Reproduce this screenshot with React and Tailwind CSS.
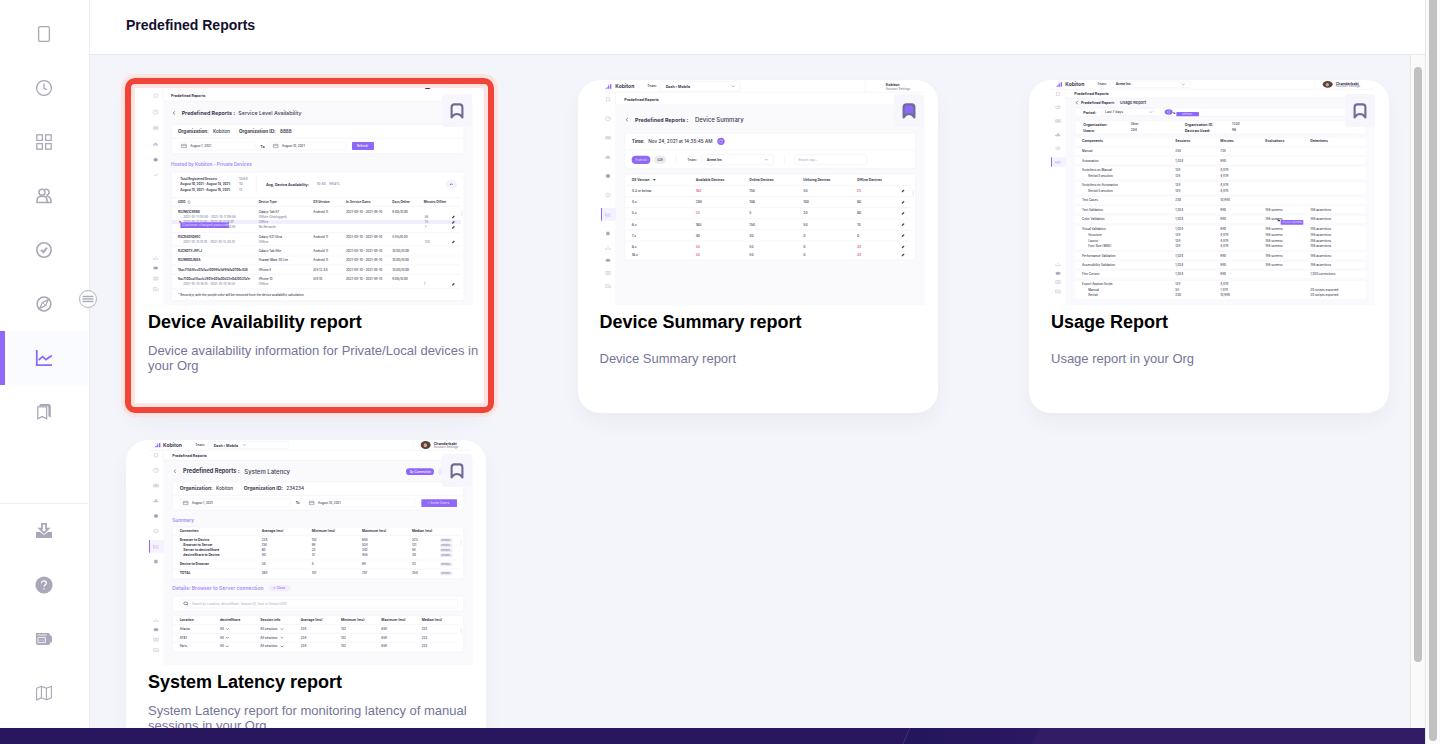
import React from "react";

const INK = "#3d3a52";
const MUTED = "#8583a0";
const PURPLE = "#8f68fa";
const PINK = "#e0447a";

/* ---------- sidebar icons ---------- */

function Icon({ children, className = "text-[#a9a7b8]" }) {
  return (
    <svg viewBox="0 0 18 18" className={`size-[18px] ${className}`} fill="none" stroke="currentColor" strokeWidth="1.3" aria-hidden="true">
      {children}
    </svg>
  );
}

const topItems = [
  { label: "Devices", icon: <rect x="3.6" y="1.6" width="10.8" height="14.8" rx="1.6" /> },
  {
    label: "Sessions",
    icon: (
      <>
        <circle cx="9" cy="9" r="7.4" />
        <path d="M9 4.6V9.3L11.8 10.6" />
      </>
    ),
  },
  {
    label: "Apps",
    icon: (
      <>
        <rect x="1.8" y="1.8" width="5.6" height="5.6" />
        <rect x="10.6" y="1.8" width="5.6" height="5.6" />
        <rect x="1.8" y="10.6" width="5.6" height="5.6" />
        <rect x="10.6" y="10.6" width="5.6" height="5.6" />
      </>
    ),
  },
  {
    label: "Teams",
    icon: (
      <g strokeWidth="1.5">
        <circle cx="7" cy="5.2" r="3" />
        <path d="M2 15.6V13.4C2 10.8 4 9.2 7 9.2S12 10.8 12 13.4V15.6Z" />
        <path d="M9.8 2.4C12 1.6 14 3 14 5.2C14 7 12.8 8 11.4 8.2M11.4 9.2C14.4 9.4 16 11.2 16 13.6V15.6H12" />
      </g>
    ),
  },
  {
    label: "Validations",
    icon: (
      <g strokeWidth="1.6">
        <circle cx="9" cy="9" r="7.2" />
        <path d="M6 8.8L8.4 11.2L12 6.6" strokeWidth="1.9" />
      </g>
    ),
  },
  {
    label: "Explore",
    icon: (
      <g strokeWidth="1.5">
        <circle cx="9" cy="9" r="6.9" />
        <path d="M13.4 4.6L10.6 10.6L4.6 13.4L7.4 7.4Z" strokeWidth="1.2" />
        <path d="M7.4 7.4L10.6 10.6" strokeWidth="1" />
      </g>
    ),
  },
  {
    label: "Reports",
    active: true,
    icon: <path d="M1.8 1V16.2H17M3.6 11.2L7.6 7.6L11 10.6L16.8 6.4" strokeWidth="1.8" />,
  },
  {
    label: "Saved",
    icon: (
      <>
        <path d="M5.4 1H13.4Q15.8 1 15.8 3V14.4L13.4 13.2V4.6Q13.4 3 11.8 3H4.2Q4.2 1 5.4 1Z" fill="currentColor" stroke="none" />
        <path d="M2.8 3.8H11.6V15.8L7.2 13.6L2.8 15.8Z" />
      </>
    ),
  },
];

const bottomItems = [
  {
    label: "Downloads",
    icon: (
      <>
        <path d="M1 10H5L9 13L13 10H17V16H1Z" fill="currentColor" stroke="none" />
        <path d="M7 1.8H11V6.6H13.4L9 11L4.6 6.6H7Z" fill="white" strokeWidth="1.8" />
      </>
    ),
  },
  {
    label: "Help",
    icon: (
      <>
        <circle cx="9" cy="9" r="8.6" fill="currentColor" stroke="none" />
        <path d="M6.6 7.2C6.6 5.6 7.6 4.8 9 4.8S11.4 5.6 11.4 7C11.4 8.8 9 8.8 9 10.8M9 12.2V13.6" stroke="white" strokeWidth="1.2" />
      </>
    ),
  },
  {
    label: "Billing",
    icon: (
      <>
        <path d="M1 3H13.4Q15 3 15 5L17 6.4V11.6L15 13Q15 15 13.4 15H3Q1 15 1 13Z" fill="currentColor" stroke="none" />
        <path d="M2.4 5H12M3 7.4H10.4V12.6H3Z" stroke="white" strokeWidth="0.8" />
        <path d="M4.6 11L6 9.4M6.6 11L8 9.4M8.4 11L9.4 9.6" stroke="white" strokeWidth="0.5" />
      </>
    ),
  },
  {
    label: "Product tour",
    icon: <path d="M1.6 4.2L6.4 2.2V13.8L1.6 15.8ZM6.4 2.2L11.4 4.2V15.8L6.4 13.8M11.4 4.2L16.4 2.2V13.8L11.4 15.8" strokeWidth="1.1" />,
  },
];

function NavItem({ label, icon, active }) {
  return (
    <a
      href="#"
      aria-label={label}
      aria-current={active ? "page" : undefined}
      className={`flex h-[54px] items-center justify-center ${active ? "border-l-[5px] border-[#8f68fa] bg-[#fafbff] pr-[5px]" : ""}`}
    >
      <Icon className={active ? "text-[#8f68fa]" : "text-[#a9a7b8]"}>{icon}</Icon>
    </a>
  );
}

/* ---------- report previews ---------- */

/* rows: [x, centre y, text] */
function Lines({ rows, size = 9, weight = 500, fill = INK }) {
  return (
    <g fontSize={size} fontWeight={weight} fill={fill}>
      {rows.map(([x, y, text], i) => (
        <text key={i} x={x} y={y} dominantBaseline="central">
          {text}
        </text>
      ))}
    </g>
  );
}

function Panel({ x, y, w, h }) {
  return <rect x={x} y={y} width={w} height={h} rx="4" fill="white" stroke="#f3f3f9" strokeWidth="2" />;
}

function Rules({ x1, x2, ys }) {
  return (
    <g stroke="#f3f3f9" strokeWidth="2">
      {ys.map((y) => (
        <line key={y} x1={x1} x2={x2} y1={y} y2={y} />
      ))}
    </g>
  );
}

function MiniNav({ x, ys, footYs, active, solid, saved, flat }) {
  const h = flat ? 6 : 10;
  return (
    <g fill="none" stroke="#bcbace" strokeWidth="1.5">
      {active && (
        <>
          <rect x={x - 20} y={active - (flat ? 14 : 19)} width="44" height={flat ? 28 : 38} fill="#f5f1ff" stroke="none" />
          <rect x={x - 21} y={active - (flat ? 14 : 19)} width="3" height={flat ? 28 : 38} fill={PURPLE} stroke="none" />
          <path d={`M${x - 7} ${active - h / 2}V${active + h / 2}H${x + 8}M${x - 4} ${active + 1}L${x} ${active - 2}L${x + 3} ${active}L${x + 8} ${active - 2}`} stroke="#b49bf8" />
        </>
      )}
      {ys.map((y, i) => {
        if (i === solid) return <ellipse key={y} cx={x} cy={y} rx="6" ry="5" fill="#9c9ab5" />;
        if (i === 0) return <rect key={y} x={x - 5} y={y - 5} width="10" height="10" rx="1" />;
        if (i === 1) return <path key={y} d={`M${x - 8} ${y}a8 ${h / 2 + 1} 0 1 0 16 0a8 ${h / 2 + 1} 0 1 0 -16 0M${x} ${y - 3}V${y}H${x + 4}`} />;
        if (i === 2) return <path key={y} d={`M${x - 7} ${y - 4}H${x - 1}V${y + 4}H${x - 7}ZM${x + 1} ${y - 4}H${x + 7}V${y + 4}H${x + 1}ZM${x - 7} ${y}H${x + 7}`} />;
        if (i === 3) return <path key={y} d={`M${x - 7} ${y + 4}V${y + 1}H${x + 6}V${y + 4}ZM${x - 3} ${y - 3}H${x + 3}V${y}H${x - 3}Z`} fill="#d5d3e2" />;
        return <path key={y} d={`M${x - 7} ${y}a7 ${h / 2 + 1} 0 1 0 14 0a7 ${h / 2 + 1} 0 1 0 -14 0M${x - 3} ${y}l3 2l4 -4`} />;
      })}
      {saved && <rect x={x - 5} y={saved - 4} width="9" height="9" fill="#a9a7c0" />}
      <path d={`M${x - 7} ${footYs[0]}V${footYs[0] + 4}H${x + 7}V${footYs[0]}M${x} ${footYs[0] - 5}V${footYs[0] + 1}`} />
      <ellipse cx={x} cy={footYs[1]} rx="7" ry="4" fill="#a09eba" />
      <path d={`M${x - 7} ${footYs[2] - 4}L${x - 2} ${footYs[2] - 5}L${x + 2} ${footYs[2] - 4}L${x + 7} ${footYs[2] - 5}V${footYs[2] + 4}H${x - 7}ZM${x - 2} ${footYs[2] - 5}V${footYs[2] + 4}M${x + 2} ${footYs[2] - 4}V${footYs[2] + 4}`} />
      <path d={`M${x - 7} ${footYs[3] - 4}H${x + 4}L${x + 8} ${footYs[3]}V${footYs[3] + 5}H${x - 7}ZM${x - 4} ${footYs[3] + 1}H${x + 5}`} />
    </g>
  );
}

function MiniLogo({ x, y }) {
  return (
    <g fill={PURPLE}>
      <path d={`M${x - 2} ${y + 7}L${x + 5} ${y + 1}V${y + 7}ZM${x + 6} ${y + 7}V${y}L${x + 10} ${y - 3}V${y + 7}ZM${x + 12} ${y + 7}V${y - 6}H${x + 16}V${y + 7}Z`} />
      <circle cx={x + 7} cy={y - 4} r="1.5" />
    </g>
  );
}

function Pencils({ x, ys }) {
  return (
    <g stroke="#4a475f" strokeWidth="4" strokeLinecap="round">
      {ys.map((y) => (
        <path key={y} d={`M${x - 2} ${y + 2}L${x + 2} ${y - 2}`} />
      ))}
    </g>
  );
}

function Chevron({ x, y, w = 4, color = "#8583a0" }) {
  return <path d={`M${x - w} ${y - 2}L${x} ${y + 2}L${x + w} ${y - 2}`} fill="none" stroke={color} strokeWidth="1.6" />;
}

function Back({ x, y }) {
  return <path d={`M${x + 2} ${y - 5}L${x - 2} ${y}L${x + 2} ${y + 5}`} fill="none" stroke={INK} strokeWidth="1.8" />;
}

function DateField({ x, y, w, text }) {
  return (
    <g>
      <Panel x={x} y={y - 12} w={w} h={24} />
      <path d={`M${x + 11} ${y - 5}H${x + 25}V${y + 5}H${x + 11}ZM${x + 11} ${y - 1}H${x + 25}`} fill="none" stroke="#77758c" strokeWidth="1.6" />
      <Lines rows={[[x + 37, y, text]]} size={9} />
    </g>
  );
}

function Preview({ viewBox, label, children }) {
  return (
    <svg viewBox={viewBox} role="img" aria-label={label} className="block w-full font-['Inter',sans-serif]">
      {children}
    </svg>
  );
}

function AvailabilityPreview() {
  const span = "2021-08-10 - 2021-08-10";
  return (
    <Preview viewBox="18 30 1080 675" label="Service Level Availability preview">
      <rect x="129" y="94" width="930" height="611" fill="#fafafd" />
      <path d="M129 50V94H1040" fill="none" stroke="#f3f3f8" strokeWidth="2" />
      <ellipse cx="923" cy="50" rx="10" ry="7" fill="#3f3330" />
      <MiniNav x={107} ys={[77, 126, 174, 222, 269]} solid={4} footYs={[564, 594, 626, 657]} />
      <path d="M101 319L105 315L109 316L114 313" fill="none" stroke="#bcbace" strokeWidth="1.6" />
      <Back x={162} y={129} />
      <Lines rows={[[153, 77, "Predefined Reports"]]} size={11} weight={700} />
      <Lines rows={[[185, 129, "Predefined Reports :"]]} size={16} weight={700} />
      <Lines rows={[[355, 129, "Service Level Availability"]]} size={16} />
      <Panel x={154} y={163} w={878} h={88} />
      <Rules x1={154} x2={1032} ys={[205]} />
      <Lines rows={[[174, 183, "Organization:"], [357, 183, "Organization ID:"]]} size={14} weight={700} />
      <Lines rows={[[279, 183, "Kobiton"], [480, 183, "8888"]]} size={14} />
      <DateField x={174} y={228} w={230} text="August 1, 2021" />
      <DateField x={449} y={228} w={230} text="August 10, 2021" />
      <Lines rows={[[421, 228, "To"]]} size={11} weight={600} />
      <rect x="696" y="216" width="66" height="24" rx="3" fill={PURPLE} />
      <Lines rows={[[711, 228, "Refresh"]]} size={9} fill="white" />
      <Lines rows={[[153, 282, "Hosted by Kobiton - Private Devices"]]} size={14} weight={600} fill="#a78af8" />
      <Panel x={154} y={306} w={878} h={386} />
      <Lines rows={[[181, 327, "Total Registered Devices:"], [181, 343, "August 10, 2021 - August 14, 2021:"], [181, 360, "August 15, 2021 - August 16, 2021:"]]} size={9} weight={700} />
      <Lines rows={[[357, 327, "10.64"], [357, 343, "10"], [357, 360, "11"], [590, 343, "10:48"], [628, 343, "99.8%"]]} size={10} fill={MUTED} />
      <line x1="409" x2="409" y1="318" y2="370" stroke="#ececf4" strokeWidth="2" />
      <Lines rows={[[438, 343, "Avg. Device Availability:"]]} size={11} weight={700} />
      <ellipse cx="994" cy="343" rx="17" ry="14" fill="#f4f3fa" />
      <path d="M990 345L994 341L998 345" fill="none" stroke={INK} strokeWidth="2" />
      <Rules x1={154} x2={1022} ys={[383, 409, 488, 528, 558, 585, 613, 656]} />
      <rect x="154" y="450" width="869" height="12" fill="#f1eefd" />
      <Lines rows={[[174, 397, "UDID"], [416, 397, "Device Type"], [580, 397, "OS Version"], [678, 397, "In-Service Dates"], [817, 397, "Days Online"], [911, 397, "Minutes Offline"]]} size={9} weight={700} />
      <circle cx="207" cy="396" r="4" fill="none" stroke={MUTED} strokeWidth="1.5" />
      <Lines rows={[[174, 425, "R52N61C9BNX"], [174, 500, "R5CR40EQ9BC"], [174, 544, "R3CN0T8 J9FLJ"], [174, 571, "R52NR00JNXA"], [174, 599, "19ac7f548fcc07a1acf0099fa1df9fb1a0706c836"], [174, 627, "9ac7f00caf2facfc3901e40fa00d22e0d20537a1e"]]} size={9} weight={700} />
      <Lines
        rows={[
          [416, 425, "Galaxy Tab S7"], [416, 500, "Galaxy S21 Ultra"], [416, 544, "Galaxy Tab S6e"], [416, 571, "Huawei Mate 20 Lite"], [416, 599, "iPhone 8"], [416, 627, "iPhone 10"],
          [580, 425, "Android 11"], [580, 500, "Android 11"], [580, 544, "Android 11"], [580, 571, "Android 11"], [580, 599, "iOS 12.4.8"], [580, 627, "iOS 10"],
          ...[425, 500, 544, 571, 599, 627].map((y) => [678, y, span]),
          [817, 425, "9.00/10.00"], [817, 500, "8.85/10.00"], [817, 544, "10.00/10.00"], [817, 571, "10.00/10.00"], [817, 599, "10.00/10.00"], [817, 627, "9.00/10.00"],
          [174, 675, "* Record(s) with the purple color will be removed from the device availability calculation"],
        ]}
        size={9}
      />
      <Lines
        rows={[
          [190, 441, "2021-10-11 08:50 - 2021-10-11 09:56"], [190, 457, "2021-10-11 12:50 - 2021-10-11 14:07"], [190, 472, "2021-10-12 10:50 - 2021-10-12 10:58"], [190, 516, "2021-10-15 18:10 - 2021-10-15 20:10"], [190, 643, "2021-10-14 16:10 - 2021-10-14 16:58"],
          [416, 441, "Offline (Unplugged)"], [416, 457, "Offline"], [416, 472, "No Network"], [416, 516, "Offline"], [416, 643, "Offline"],
          [914, 441, "66"], [914, 457, "75"], [914, 472, "7"], [914, 516, "120"], [911, 643, "7"],
        ]}
        size={9}
        fill={MUTED}
      />
      <Pencils x={1000} ys={[441, 457, 472, 516, 643]} />
      <rect x="181" y="457" width="146" height="17" fill={PURPLE} />
      <path d="M177 452L183 455L180 459Z" fill={INK} />
      <Lines rows={[[187, 465, "Customer changed passcode"]]} size={10} fill="#ddd0ff" />
      <rect x="1024" y="422" width="3" height="16" fill="#e8e8f0" />
    </Preview>
  );
}

function SummaryPreview() {
  const body = [
    [363, "4.3 or below", "180", "150", "50", "25"],
    [397, "4.x", "200", "108", "100", "80"],
    [430, "5.x", "25", "5", "20", "80"],
    [464, "6.x", "180", "150", "50", "10"],
    [497, "7.x", "40", "40", "0", "0"],
    [531, "8.x", "50", "50", "0", "34"],
    [555, "18.x", "50", "50", "0", "34"],
  ];
  const red = new Set([363, 430, 531, 555]);
  const redLast = new Set([363, 531, 555]);
  return (
    <Preview viewBox="21 30 1080 675" label="Device Summary preview">
      <rect x="133" y="105" width="928" height="600" fill="#fafafd" />
      <path d="M90 67H1060M133 67V105H1060M883 30V67" fill="none" stroke="#f3f3f8" strokeWidth="2" />
      <MiniLogo x={105} y={49} />
      <Lines rows={[[133, 49, "Kobiton"]]} size={15} weight={700} />
      <Lines rows={[[229, 49, "Team:"]]} size={10} />
      <Panel x={268} y={34} w={240} h={29} />
      <Lines rows={[[284, 49, "Dash  ›  Mobile"], [160, 87, "Predefined Reports"], [944, 44, "Kobiton"]]} size={11} weight={700} />
      <Lines rows={[[944, 57, "Account Settings"]]} size={9} fill={MUTED} />
      <Chevron x={487} y={49} />
      <MiniNav x={111} ys={[88, 146, 203, 261, 318, 376]} solid={4} active={433} saved={490} footYs={[534, 571, 609, 648]} />
      <Back x={168} y={149} />
      <Lines rows={[[192, 149, "Predefined Reports :"]]} size={16} weight={700} />
      <Lines rows={[[372, 149, "Device Summary"]]} size={18} />
      <Panel x={161} y={189} w={873} h={107} />
      <Rules x1={161} x2={1034} ys={[240]} />
      <Lines rows={[[182, 214, "Time:"]]} size={14} weight={700} />
      <Lines rows={[[232, 214, "Nov 24, 2021 at 14:35:45 AM"]]} size={14} />
      <circle cx="450" cy="214" r="11" fill={PURPLE} />
      <path d="M454 211A5 5 0 1 0 455 216M455 209V213H451" fill="none" stroke="#ded0ff" strokeWidth="1.6" />
      <rect x="182" y="257" width="56" height="25" rx="12" fill={PURPLE} />
      <rect x="249" y="257" width="36" height="25" rx="12" fill="#ededf5" />
      <Lines rows={[[193, 269, "Android"]]} size={9} fill="#ddd0ff" />
      <Lines rows={[[259, 269, "iOS"], [349, 269, "Team:"]]} size={10} />
      <Panel x={391} y={254} w={216} h={30} />
      <Lines rows={[[407, 269, "Acme Inc."]]} size={10} weight={700} />
      <Chevron x={586} y={269} />
      <path d="M316 254V284M640 254V284" stroke="#f1f1f7" strokeWidth="2" />
      <Panel x={671} y={254} w={216} h={30} />
      <Lines rows={[[682, 269, "Search tags..."]]} size={9} fill="#b7b5c9" />
      <Panel x={161} y={312} w={873} h={258} />
      <Lines rows={[[182, 329, "OS Version"], [374, 329, "Available Devices"], [535, 329, "Online Devices"], [697, 329, "Utilizing Devices"], [858, 329, "Offline Devices"]]} size={10} weight={700} />
      <path d="M246 327H254L250 332Z" fill={INK} />
      <Rules x1={161} x2={1022} ys={[346, 380, 413, 447, 480, 513]} />
      {body.map(([y, os, avail, online, util, off]) => (
        <g key={y}>
          <Lines rows={[[182, y, os], [535, y, online], [697, y, util]]} size={10} />
          <Lines rows={[[374, y, avail]]} size={10} fill={red.has(y) ? PINK : INK} />
          <Lines rows={[[858, y, off]]} size={10} fill={redLast.has(y) ? PINK : INK} />
        </g>
      ))}
      <Pencils x={996} ys={body.map((r) => r[0])} />
      <rect x="1025" y="362" width="3" height="17" fill="#e8e8f0" />
    </Preview>
  );
}

function UsagePreview() {
  const bands = [
    [205, 22], [235, 19], [262, 20], [291, 37], [336, 37], [382, 20], [409, 20], [437, 22], [468, 71], [547, 20], [575, 20], [603, 20], [633, 54],
  ];
  const body = [
    [244, "Manual", "254", "734"],
    [272, "Automation", "1,024", "980"],
    [301, "Scriptless on Manual", "128", "4,878"],
    [346, "Scriptless on Automation", "128", "4,878"],
    [391, "Test Cases", "230", "10,980"],
    [419, "Text Validation", "1,024", "980", "186 screens", "186 assertions"],
    [448, "Color Validation", "1,024", "980", "186 screens", "186 assertions"],
    [478, "Visual Validation", "1,024", "980", "186 screens", "186 assertions"],
    [557, "Performance Validation", "1,024", "980", "186 screens", "186 assertions"],
    [585, "Accessibility Validation", "1,024", "980", "186 screens", "186 assertions"],
    [613, "Flex Correct", "1,024", "980", "", "1,020 corrections"],
    [642, "Export Appium Script", "128", "4,878"],
  ];
  const sub = [
    [317, "Revisit Execution", "128", "4,878"],
    [362, "Revisit Execution", "128", "4,878"],
    [495, "Structure", "128", "4,878", "186 screens", "186 assertions"],
    [512, "Layout", "128", "4,878", "186 screens", "186 assertions"],
    [529, "Font Size (WBE)", "128", "4,878", "186 screens", "186 assertions"],
    [659, "Manual", "58", "1,878", "", "20 scripts exported"],
    [676, "Revisit", "230", "10,980", "", "20 scripts exported"],
  ];
  const cells = (row, x) => [[x, row[0], row[1]], [466, row[0], row[2]], [601, row[0], row[3]], [736, row[0], row[4]], [871, row[0], row[5]]]
    .map(([cx, y, text]) => [cx, y, text])
    .filter((cell) => cell[2]);
  return (
    <Preview viewBox="27 30 1080 675" label="Usage Report preview">
      <rect x="136" y="84" width="929" height="621" fill="#fafafe" />
      <path d="M90 58H1060M136 58V84H1060M884 30V58" fill="none" stroke="#f3f3f8" strokeWidth="2" />
      <MiniLogo x={110} y={43} />
      <Lines rows={[[136, 43, "Kobiton"]]} size={15} weight={700} />
      <Lines rows={[[232, 43, "Team:"]]} size={10} />
      <Panel x={271} y={33} w={240} h={20} />
      <Lines rows={[[287, 43, "Acme Inc."]]} size={10} weight={700} />
      <Chevron x={490} y={43} />
      <ellipse cx="923" cy="43" rx="15" ry="10" fill="#5b433b" />
      <ellipse cx="922" cy="44" rx="5" ry="5" fill="#d9a58c" />
      <Lines rows={[[947, 40, "Chanderbabi"]]} size={11} weight={700} />
      <Lines rows={[[947, 49, "Account Settings"]]} size={9} fill={MUTED} />
      <MiniNav x={114} ys={[72, 112, 153, 194, 235]} active={276} flat footYs={[583, 610, 636, 664]} />
      <Lines rows={[[163, 71, "Predefined Reports"]]} size={11} weight={700} />
      <Back x={171} y={98} />
      <Lines rows={[[183, 98, "Predefined Report:"]]} size={11} weight={700} />
      <Lines rows={[[300, 98, "Usage Report"]]} size={12} weight={600} />
      <Panel x={165} y={113} w={872} h={26} />
      <Panel x={245} y={116} w={160} h={20} />
      <Lines rows={[[190, 126, "Period:"]]} size={11} weight={700} />
      <Lines rows={[[255, 126, "Last 7 days"]]} size={10} />
      <Chevron x={393} y={126} />
      <ellipse cx="446" cy="126" rx="12" ry="8" fill={PURPLE} />
      <path d="M450 124A5 3 0 1 0 450 128" fill="none" stroke="#ded0ff" strokeWidth="1.6" />
      <path d="M457 127L468 129L463 132Z" fill={INK} />
      <rect x="469" y="126" width="68" height="13" rx="2" fill={PURPLE} />
      <Lines rows={[[487, 132, "Refresh"]]} size={8} fill="#ddd0ff" />
      <Panel x={165} y={151} w={872} h={41} />
      <Lines rows={[[190, 162, "Organization:"], [190, 181, "Users:"], [494, 162, "Organization ID:"], [494, 181, "Devices Used:"]]} size={11} weight={700} />
      <Lines rows={[[332, 162, "Uber"], [332, 181, "204"], [636, 162, "1234"], [636, 181, "96"]]} size={10} />
      {bands.map(([y, h]) => (
        <rect key={y} x="165" y={y} width="872" height={h} fill="white" />
      ))}
      <Lines rows={[[186, 214, "Components"], [466, 214, "Sessions"], [601, 214, "Minutes"], [736, 214, "Evaluations"], [871, 214, "Detections"]]} size={10} weight={700} />
      <Lines rows={body.flatMap((r) => cells(r, 186))} size={9} />
      <Lines rows={sub.flatMap((r) => cells(r, 205))} size={9} />
      <path d="M769 447L781 451L777 455Z" fill={INK} />
      <rect x="782" y="450" width="68" height="14" rx="2" fill={PURPLE} />
      <Lines rows={[[787, 457, "35,423 screens"]]} size={8} fill="#ddd0ff" />
    </Preview>
  );
}

function LatencyPreview() {
  const summary = [
    [331, 179, "Browser to Device", "234", "152", "658", "223"],
    [346, 190, "Browser to Server", "134", "98", "534", "121"],
    [361, 190, "Server to deviceShare", "60", "23", "342", "58"],
    [376, 190, "deviceShare to Device", "40", "12", "455", "30"],
    [403, 179, "Device to Browser", "34", "5", "98", "32"],
    [430, 179, "TOTAL", "268", "157", "757", "254"],
  ];
  const details = [
    [597, "Atlanta"],
    [623, "AT&T"],
    [649, "Paris"],
  ];
  return (
    <Preview viewBox="18 30 1080 675" label="System Latency preview">
      <rect x="130" y="91" width="929" height="614" fill="#fafafd" />
      <path d="M88 61H1055M130 61V91H1055M880 30V61" fill="none" stroke="#f3f3f8" strokeWidth="2" />
      <MiniLogo x={105} y={45} />
      <Lines rows={[[129, 45, "Kobiton"]]} size={15} weight={700} />
      <Lines rows={[[226, 45, "Team:"]]} size={10} />
      <Panel x={265} y={34} w={240} h={22} />
      <Lines rows={[[281, 45, "Dash  ›  Mobile"], [157, 75, "Predefined Reports"]]} size={11} weight={700} />
      <Chevron x={373} y={45} />
      <ellipse cx="917" cy="45" rx="15" ry="12" fill="#5b433b" />
      <ellipse cx="916" cy="46" rx="5" ry="6" fill="#d9a58c" />
      <Lines rows={[[941, 41, "Chanderbabi"]]} size={11} weight={700} />
      <Lines rows={[[941, 51, "Account Settings"]]} size={9} fill={MUTED} />
      <MiniNav x={108} ys={[76, 121, 167, 212, 258, 303]} solid={4} active={349} saved={394} footYs={[570, 599, 629, 660]} />
      <Back x={165} y={124} />
      <Lines rows={[[189, 124, "Predefined Reports :"]]} size={17} weight={700} />
      <Lines rows={[[373, 124, "System Latency"]]} size={18} />
      <rect x="858" y="115" width="84" height="20" rx="10" fill={PURPLE} />
      <Lines rows={[[870, 125, "By Connection"]]} size={9} fill="white" />
      <rect x="954" y="115" width="84" height="20" rx="10" fill="#ededf5" />
      <Panel x={157} y={156} w={874} h={84} />
      <Rules x1={157} x2={1031} ys={[196]} />
      <Lines rows={[[179, 175, "Organization:"], [371, 175, "Organization ID:"]]} size={15} weight={700} />
      <Lines rows={[[288, 175, "Kobiton"], [499, 175, "234234"]]} size={14} />
      <DateField x={179} y={219} w={332} text="August 1, 2021" />
      <DateField x={557} y={219} w={330} text="August 10, 2021" />
      <Lines rows={[[527, 219, "To"]]} size={10} weight={600} />
      <rect x="904" y="208" width="107" height="23" rx="2" fill={PURPLE} />
      <Lines rows={[[922, 219, "+  Invite Users"]]} size={10} fill="#e4d9ff" />
      <Lines rows={[[157, 271, "Summary"]]} size={14} weight={600} fill="#a78af8" />
      <Panel x={157} y={291} w={874} h={156} />
      <Lines rows={[[179, 304, "Connection"], [425, 304, "Average (ms)"], [575, 304, "Minimum (ms)"], [726, 304, "Maximum (ms)"], [876, 304, "Median (ms)"]]} size={10} weight={700} />
      <Rules x1={157} x2={1022} ys={[317, 390, 417]} />
      <Lines rows={summary.map((r) => [r[1], r[0], r[2]])} size={10} weight={700} />
      <Lines rows={summary.flatMap((r) => [[425, r[0], r[3]], [575, r[0], r[4]], [726, r[0], r[5]], [876, r[0], r[6]]])} size={9} />
      {summary.map(([y]) => (
        <g key={y}>
          <rect x="960" y={y - 6} width="38" height="12" rx="5" fill="#ecebf5" />
          <Lines rows={[[964, y, "Details"]]} size={8} fill={MUTED} />
        </g>
      ))}
      <rect x="1022" y="330" width="3" height="15" fill="#e8e8f0" />
      <Lines rows={[[157, 475, "Details: Browser to Server connection"]]} size={15} weight={600} fill="#a78af8" />
      <rect x="447" y="466" width="65" height="18" rx="8" fill="#f3edff" />
      <Lines rows={[[459, 475, "✕  Close"]]} size={9} fill={PURPLE} />
      <Panel x={157} y={498} w={874} h={46} />
      <Panel x={179} y={508} w={833} h={26} />
      <ellipse cx="197" cy="520" rx="6" ry="4" fill="none" stroke={INK} strokeWidth="1.6" />
      <path d="M201 523L205 526" stroke={INK} strokeWidth="1.6" />
      <Lines rows={[[216, 521, "Search by Location, deviceShare, Session ID, User or Device UDID"]]} size={9} fill="#b7b5c9" />
      <Panel x={157} y={557} w={874} h={109} />
      <Rules x1={157} x2={1014} ys={[583, 610, 637]} />
      <Lines rows={[[179, 570, "Location"], [300, 570, "deviceShare"], [421, 570, "Session info"], [542, 570, "Average (ms)"], [663, 570, "Minimum (ms)"], [784, 570, "Maximum (ms)"], [905, 570, "Median (ms)"]]} size={10} weight={700} />
      <Lines rows={details.flatMap(([y, place]) => [[179, y, place], [300, y, "All"], [421, y, "All sessions"], [542, y, "234"], [663, y, "152"], [784, y, "658"], [905, y, "223"]])} size={9} />
      {details.map(([y]) => (
        <g key={y}>
          <Chevron x={322} y={y} color={INK} />
          <Chevron x={486} y={y} color={INK} />
        </g>
      ))}
      <rect x="1022" y="595" width="3" height="15" fill="#e8e8f0" />
    </Preview>
  );
}

/* ---------- page ---------- */

const reports = [
  { title: "Device Availability report", text: "Device availability information for Private/Local devices in your Org", Preview: AvailabilityPreview, highlighted: true },
  { title: "Device Summary report", text: "Device Summary report", Preview: SummaryPreview, saved: true },
  { title: "Usage Report", text: "Usage report in your Org", Preview: UsagePreview },
  { title: "System Latency report", text: "System Latency report for monitoring latency of manual sessions in your Org", Preview: LatencyPreview },
];

function ReportCard({ title, text, Preview: Picture, saved, highlighted }) {
  return (
    <article className="relative">
      <div className="h-full overflow-hidden rounded-[22px] bg-white shadow-[0_10px_20px_rgba(30,30,60,0.04)]">
        <Picture />
        <div className="pt-1.5 pr-0.5 pb-[30px] pl-[22px]">
          <h2 className="text-[18px] leading-[22px] font-bold text-black">{title}</h2>
          <p className="flex h-[50px] items-center text-[13px] leading-[15px] text-[#77749a]">{text}</p>
        </div>
      </div>
      <button type="button" aria-label={`Bookmark ${title}`} aria-pressed={!!saved} className="absolute top-3.5 right-3.5 flex h-[33px] w-[30px] items-center justify-center rounded-[3px] bg-[#f7f6fd]">
        <svg viewBox="0 0 16 18" className="h-[18px] w-4" aria-hidden="true">
          <path
            d="M2.6 15.4V5.2Q2.6 2.4 5.4 2.4H10.6Q13.4 2.4 13.4 5.2V15.4Q11.4 12 8 12Q4.6 12 2.6 15.4Z"
            fill={saved ? PURPLE : "none"}
            stroke="#6f6b93"
            strokeWidth="2.1"
            strokeLinejoin="round"
          />
        </svg>
      </button>
      {highlighted && (
        <div className="pointer-events-none absolute -top-0.5 -right-2 bottom-0 -left-px rounded-[10px] border-[6px] border-[#f04438] shadow-[0_0_0_4px_#fde3e1,inset_0_0_0_4px_#fde3e1]" />
      )}
    </article>
  );
}

export default function App() {
  return (
    <div className="flex h-screen overflow-hidden bg-white font-['Liberation_Sans',Arial,sans-serif]">
      <div className="flex min-w-0 flex-1 flex-col">
        <div className="flex min-h-0 flex-1">
          <aside className="relative flex w-[90px] shrink-0 flex-col border-r border-[#ececf0] bg-white pt-[7px]">
            <nav aria-label="Main" className="mr-px">
              {topItems.map((item) => (
                <NavItem key={item.label} {...item} />
              ))}
            </nav>
            <nav aria-label="Support" className="mt-auto mr-px border-t border-[#ececec] pb-2">
              {bottomItems.map((item) => (
                <NavItem key={item.label} {...item} />
              ))}
            </nav>
            <button type="button" aria-label="Expand menu" className="absolute top-[290px] -right-2 z-10 flex size-[18px] items-center justify-center rounded-full border border-[#b4b4c4] bg-white">
              <svg viewBox="0 0 12 8" className="h-2 w-3 shrink-0" aria-hidden="true">
                <path d="M0.5 1.5H11.5M0.5 4H11.5M0.5 6.5H11.5" stroke="#aeaec2" strokeWidth="1.4" />
              </svg>
            </button>
          </aside>

          <div className="flex min-w-0 flex-1 flex-col">
            <header className="flex h-[55px] shrink-0 items-center border-b border-[#e8e8ec] bg-white pb-1 pl-9">
              <h1 className="text-[14px] leading-5 font-bold text-[#14102e]">Predefined Reports</h1>
            </header>
            <div className="flex min-h-0 flex-1">
              <main className="min-w-0 flex-1 overflow-hidden bg-[#f4f5fa] pt-[25px] pr-[21px] pl-9">
                <div className="grid grid-cols-[repeat(3,360px)] justify-between gap-y-[27px]">
                  {reports.map((report) => (
                    <ReportCard key={report.title} {...report} />
                  ))}
                </div>
              </main>
              <div aria-hidden="true" className="flex w-[15px] shrink-0 flex-col items-center border-l border-[#e6e6e6] bg-[#fafafa] pt-3 pb-[66px]">
                <div className="w-2 flex-1 rounded-full bg-[#c1c1c1]" />
              </div>
            </div>
          </div>
        </div>
        <footer className="flex h-4 shrink-0 justify-end bg-[#28175f]">
          <svg viewBox="0 0 524 16" className="h-4 w-[524px]" aria-hidden="true">
            <defs>
              <linearGradient id="sheen" x1="0" x2="1">
                <stop offset="0" stopColor="#23165b" />
                <stop offset="1" stopColor="#2b1863" />
              </linearGradient>
            </defs>
            <path d="M9 0H139L130 16H2Z" fill="url(#sheen)" />
            <path d="M139 0H524V16H130Z" fill="#321c66" />
            <path d="M9 0L2 16" stroke="#44307a" strokeWidth="1" />
          </svg>
        </footer>
      </div>
      <div aria-hidden="true" className="flex w-[15px] shrink-0 flex-col items-center border-l border-[#e6e6e6] bg-[#fafafa] pb-[3px]">
        <div className="w-2 flex-1 rounded-b-full bg-[#c1c1c1]" />
      </div>
    </div>
  );
}
